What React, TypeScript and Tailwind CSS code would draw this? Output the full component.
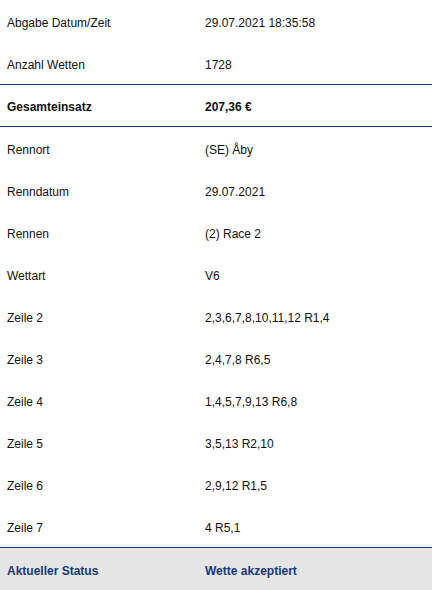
const rows: { label: string; value: string }[] = [
  { label: "Rennort", value: "(SE) Åby" },
  { label: "Renndatum", value: "29.07.2021" },
  { label: "Rennen", value: "(2) Race 2" },
  { label: "Wettart", value: "V6" },
  { label: "Zeile 2", value: "2,3,6,7,8,10,11,12 R1,4" },
  { label: "Zeile 3", value: "2,4,7,8 R6,5" },
  { label: "Zeile 4", value: "1,4,5,7,9,13 R6,8" },
  { label: "Zeile 5", value: "3,5,13 R2,10" },
  { label: "Zeile 6", value: "2,9,12 R1,5" },
  { label: "Zeile 7", value: "4 R5,1" },
];

function Row({ label, value }: { label: string; value: string }) {
  return (
    <div className="grid h-[42px] grid-cols-[205px_1fr] items-center pt-[3px]">
      <span className="pl-[7px]">{label}</span>
      <span>{value}</span>
    </div>
  );
}

export default function App() {
  return (
    <div className="w-[432px] bg-white text-[12px] text-[#111] font-['Liberation_Sans',Arial,sans-serif]">
      <Row label="Abgabe Datum/Zeit" value="29.07.2021 18:35:58" />
      <Row label="Anzahl Wetten" value="1728" />

      {/* Total */}
      <div className="grid h-[43px] grid-cols-[205px_1fr] items-center border-y border-[#0c3877] pt-[3px] font-bold">
        <span className="pl-[7px]">Gesamteinsatz</span>
        <span>207,36 €</span>
      </div>

      {rows.map((r) => (
        <Row key={r.label} label={r.label} value={r.value} />
      ))}

      {/* Status */}
      <div className="grid h-[43px] grid-cols-[205px_1fr] items-center border-t border-[#0c3877] bg-[#e5e5e5] pt-[3px] font-bold text-[#153a7c]">
        <span className="pl-[7px]">Aktueller Status</span>
        <span>Wette akzeptiert</span>
      </div>
    </div>
  );
}
